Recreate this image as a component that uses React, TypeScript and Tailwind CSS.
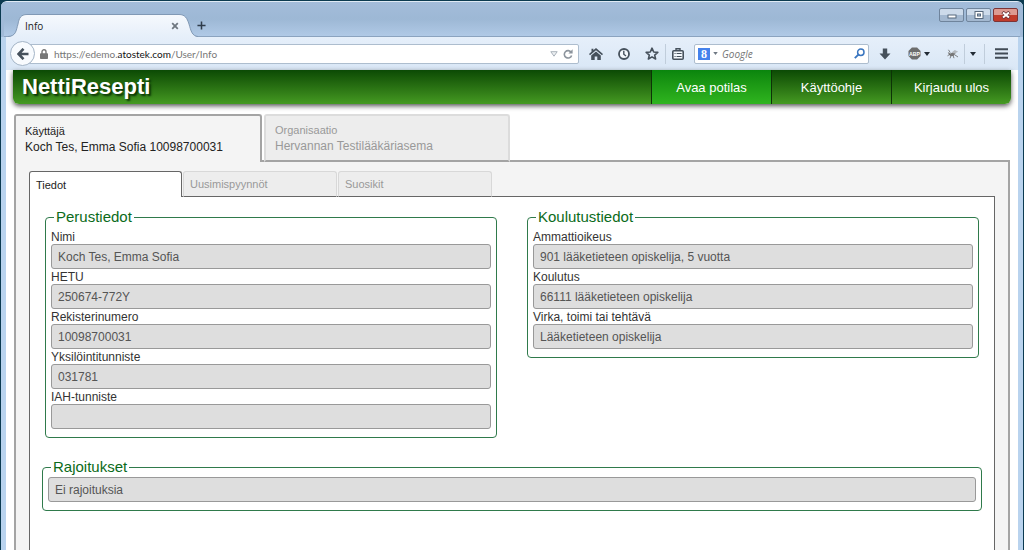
import { useState } from 'react';
import type { ReactNode } from 'react';

function BrowserTab() {
  return (
    <div className="relative -mb-px ml-1 flex h-[23px] w-[190px] items-center pr-[17px] pl-[17px]">
      <svg className="absolute inset-0 h-full w-full" viewBox="0 0 190 23" preserveAspectRatio="none" aria-hidden="true">
        <defs>
          <linearGradient id="tabFill" x1="0" y1="0" x2="0" y2="1">
            <stop offset="0" stopColor="#f6f9fd" />
            <stop offset="1" stopColor="#e6effa" />
          </linearGradient>
        </defs>
        <path d="M0 23 C8 22 8 17 10 10 C11 4 13 0.5 19 0.5 H171 C177 0.5 179 4 181 10 C183 17 184 22 190 23 Z" fill="url(#tabFill)" />
        <path d="M0 22.5 C8 22 8 17 10 10 C11 4 13 0.5 19 0.5 H171 C177 0.5 179 4 181 10 C183 17 184 22 190 22.5" fill="none" stroke="#8199b5" />
      </svg>
      <span className="relative flex-1 text-[10px] leading-4 text-[#222]">Info</span>
      <button aria-label="Sulje välilehti" className="relative flex size-3 items-center justify-center">
        <svg viewBox="0 0 8 8" className="size-2" aria-hidden="true">
          <path d="M1.2 1.2 L6.8 6.8 M6.8 1.2 L1.2 6.8" stroke="#6f7780" strokeWidth="1.8" />
        </svg>
      </button>
    </div>
  );
}

function TitleBar() {
  return (
    <div className="flex h-[35px] items-end justify-between rounded-t-[5px] border-b border-[#8ba3bf] bg-linear-to-b from-[#a3bcda] via-[#9db8d5] to-[#b0c9e6]">
      <div className="flex items-end">
        <BrowserTab />
        <button aria-label="Uusi välilehti" className="mb-[5px] -ml-[3px] flex size-3 items-center justify-center">
          <svg viewBox="0 0 10 10" className="size-[9px]" aria-hidden="true">
            <path d="M5 0.5 V9.5 M0.5 5 H9.5" stroke="#2f3c4b" strokeWidth="1.7" />
          </svg>
        </button>
      </div>
      <div className="flex gap-0.5 self-start pt-[6px] pr-0.5">
        <button aria-label="Pienennä" className="flex h-[14px] w-[25px] items-center justify-center rounded-[2px] border border-[#6f849c] bg-linear-to-b from-[#ccdaea] from-50% to-[#a3b8d0] to-50%">
          <svg viewBox="0 0 10 8" className="h-2 w-[10px]" aria-hidden="true">
            <rect x="1" y="4" width="8" height="3" fill="#fff" stroke="#56687d" />
          </svg>
        </button>
        <button aria-label="Suurenna" className="flex h-[14px] w-[25px] items-center justify-center rounded-[2px] border border-[#6f849c] bg-linear-to-b from-[#ccdaea] from-50% to-[#a3b8d0] to-50%">
          <svg viewBox="0 0 10 8" className="h-2 w-[10px]" aria-hidden="true">
            <rect x="1" y="0.5" width="8" height="7" fill="#fff" stroke="#56687d" />
            <rect x="3.5" y="3" width="3" height="2" fill="#a9bdd4" stroke="#56687d" />
          </svg>
        </button>
        <button aria-label="Sulje" className="flex h-[14px] w-[25px] items-center justify-center rounded-[2px] border border-[#7d3436] bg-linear-to-b from-[#dd9a91] from-50% to-[#c03b2b] to-50%">
          <svg viewBox="0 0 10 8" className="h-2 w-[10px]" aria-hidden="true">
            <path d="M1.5 1 L8.5 7 M8.5 1 L1.5 7" stroke="#6b3334" strokeWidth="3.4" />
            <path d="M2 1.4 L8 6.6 M8 1.4 L2 6.6" stroke="#fff" strokeWidth="2" />
          </svg>
        </button>
      </div>
    </div>
  );
}

function ToolButton({ label, className, children }: { label: string; className: string; children: ReactNode }) {
  return (
    <button aria-label={label} className={`flex h-5 shrink-0 items-center justify-center ${className}`}>
      {children}
    </button>
  );
}

function Caret() {
  return (
    <svg viewBox="0 0 6 4" className="h-1 w-1.5" aria-hidden="true">
      <path d="M0 0 H6 L3 4 Z" fill="#222b35" />
    </svg>
  );
}

function Toolbar() {
  return (
    <div className="flex h-[33px] items-center bg-linear-to-b from-[#e6effa] to-[#d9e7f6] px-1">
      <button aria-label="Takaisin" className="z-10 flex size-[25px] shrink-0 items-center justify-center rounded-full border border-[#a3b4c6] bg-[#f8fbfe]">
        <svg viewBox="0 0 12 12" className="size-3" aria-hidden="true">
          <path d="M6.5 0.8 L1.5 6 L6.5 11.2 M2 6 H11.5" fill="none" stroke="#46515c" strokeWidth="2.6" />
        </svg>
      </button>
      <div className="-ml-3 flex h-5 flex-1 items-center rounded-[2px] border border-[#adbdce] bg-white pr-[5px] pl-4">
        <svg viewBox="0 0 8 10" className="h-[10px] w-2 shrink-0" aria-hidden="true">
          <path d="M2 5 V2.8 A2 2 0 0 1 6 2.8 V5" fill="none" stroke="#777" strokeWidth="1.4" />
          <rect y="4.2" width="8" height="5.8" rx="0.8" fill="#777" />
        </svg>
        <p className="ml-[6px] flex-1 font-[Lato,'Open_Sans',sans-serif] text-[10px] leading-4 text-[#777]">
          https://edemo.<span className="text-[#111]">atostek.com</span>/User/Info
        </p>
        <svg viewBox="0 0 8 6" className="h-1.5 w-2" aria-hidden="true">
          <path d="M0.8 0.7 H7.2 L4 5.2 Z" fill="#eceff2" stroke="#aab2bb" />
        </svg>
        <button aria-label="Päivitä" className="ml-[5px]">
          <svg viewBox="0 0 10 10" className="size-[10px]" aria-hidden="true">
            <path d="M8.2 3.4 A3.7 3.7 0 1 0 8.6 6.4" fill="none" stroke="#8c949d" strokeWidth="1.6" />
            <path d="M9.6 0.3 V4.5 H5.4 Z" fill="#8c949d" />
          </svg>
        </button>
      </div>
      <ToolButton label="Koti" className="ml-[3px] w-7">
        <svg viewBox="0 0 14 12" className="h-3 w-[14px]" aria-hidden="true">
          <path d="M7 0 L14 6 L13 7.2 L7 2.2 L1 7.2 L0 6 L2.5 3.8 V0.8 H4.4 V2.2 Z" fill="#46515c" />
          <path d="M7 3.4 L11.8 7.4 V12 H8.3 V8.4 H5.7 V12 H2.2 V7.4 Z" fill="#46515c" />
        </svg>
      </ToolButton>
      <ToolButton label="Historia" className="w-7">
        <svg viewBox="0 0 12 12" className="size-3" aria-hidden="true">
          <circle cx="6" cy="6" r="5" fill="#f4f8fc" stroke="#46515c" strokeWidth="1.8" />
          <path d="M5.8 2.8 V6.2 L8 8" fill="none" stroke="#46515c" strokeWidth="1.4" />
        </svg>
      </ToolButton>
      <ToolButton label="Lisää kirjanmerkki" className="w-7 border-r border-[#c0cddb]">
        <svg viewBox="0 0 14 13" className="h-[13px] w-[14px]" aria-hidden="true">
          <path d="M7 1.2 L8.7 5 L12.8 5.4 L9.7 8.1 L10.6 12 L7 9.9 L3.4 12 L4.3 8.1 L1.2 5.4 L5.3 5 Z" fill="none" stroke="#46515c" strokeWidth="1.6" strokeLinejoin="round" />
        </svg>
      </ToolButton>
      <ToolButton label="Kirjanmerkit" className="w-[23px]">
        <svg viewBox="0 0 12 12" className="size-3" aria-hidden="true">
          <rect x="0.8" y="2.8" width="10.4" height="8.4" rx="1" fill="#f4f8fc" stroke="#46515c" strokeWidth="1.6" />
          <path d="M4 2.5 V0.7 H8 V2.5" fill="none" stroke="#46515c" strokeWidth="1.4" />
          <path d="M2.5 5.5 H3.6 M4.6 5.5 H9.6 M2.5 8.5 H3.6 M4.6 8.5 H9.6" stroke="#46515c" />
        </svg>
      </ToolButton>
      <div className="ml-[5px] flex h-5 w-[175px] shrink-0 items-center rounded-[2px] border border-[#adbdce] bg-white px-[3px]">
        <span className="flex size-3 shrink-0 items-center justify-center bg-[#4582ec] font-['Liberation_Serif',serif] text-[12px] leading-3 font-bold text-white">
          8
        </span>
        <svg viewBox="0 0 6 4" className="ml-[3px] h-[3px] w-[5px] shrink-0" aria-hidden="true">
          <path d="M0 0 H6 L3 4 Z" fill="#6f7883" />
        </svg>
        <input
          type="text"
          aria-label="Google-haku"
          placeholder="Google"
          className="ml-1 w-full min-w-0 bg-transparent text-[10px] leading-4 text-[#333] italic outline-none placeholder:text-[#757575]"
        />
        <svg viewBox="0 0 11 11" className="size-[11px] shrink-0" aria-hidden="true">
          <circle cx="6.8" cy="4.2" r="3.2" fill="none" stroke="#3a76c0" strokeWidth="1.5" />
          <path d="M4.4 6.6 L0.8 10.2" stroke="#3a76c0" strokeWidth="1.9" />
        </svg>
      </div>
      <ToolButton label="Lataukset" className="ml-0.5 w-7">
        <svg viewBox="0 0 12 12" className="size-3" aria-hidden="true">
          <path d="M3.8 0.5 H8.2 V5.5 H11.5 L6 11.5 L0.5 5.5 H3.8 Z" fill="#46515c" />
        </svg>
      </ToolButton>
      <ToolButton label="Adblock Plus" className="ml-[9px] gap-[3px]">
        <svg viewBox="0 0 14 14" className="size-[13px]" aria-hidden="true">
          <path d="M4.2 0.5 H9.8 L13.5 4.2 V9.8 L9.8 13.5 H4.2 L0.5 9.8 V4.2 Z" fill="#6d6d6d" />
          <text x="7" y="9.3" textAnchor="middle" fontSize="5.6" fontWeight="bold" fontFamily="Liberation Sans, sans-serif" fill="#fff">ABP</text>
        </svg>
        <Caret />
      </ToolButton>
      <ToolButton label="Firebug" className="ml-[13px] w-[22px] border-r border-[#c0cddb] pr-0.5">
        <svg viewBox="0 0 12 10" className="h-[10px] w-3" aria-hidden="true">
          <path d="M0.8 3 L3.4 4.4 L5.6 3.6 L8.6 4.2 L7 6.8 L3.6 7.2 L1.8 5.6 Z" fill="#777" />
          <path d="M4.5 3.5 L7.8 1 L11.2 2.8 L7.5 4.6 Z" fill="#b4b9bf" />
          <path d="M0.5 6.8 L2.8 5.4 M3 9.4 L4 6.8 M7 9.2 L6 6.4 M8 6 L11 8 M1.5 0.8 L3.2 3.6" stroke="#666" strokeWidth="0.8" />
        </svg>
      </ToolButton>
      <ToolButton label="Firebug-valikko" className="w-5 border-r border-[#c0cddb] pr-1">
        <Caret />
      </ToolButton>
      <ToolButton label="Valikko" className="mr-[6px] ml-[9px] w-[14px]">
        <svg viewBox="0 0 13 11" className="h-[11px] w-[13px]" aria-hidden="true">
          <path d="M0 1.2 H13 M0 5.5 H13 M0 9.8 H13" stroke="#414b56" strokeWidth="2" />
        </svg>
      </ToolButton>
    </div>
  );
}

function SiteHeader() {
  return (
    <header className="flex h-[34px] items-stretch justify-between overflow-hidden rounded-b-[6px] bg-linear-to-b from-[#0b4a05] to-[#459a22] text-white">
      <h1 className="pl-[9px] text-[22px] leading-[34px] font-bold text-shadow-[2px_2px_2px_#0a3306]">NettiResepti</h1>
      <nav className="flex text-center text-[13px] leading-[35px]">
        <a href="#avaa" className="w-[120px] border-l border-[#0d3307] bg-linear-to-b from-[#0a850d] to-[#2fb51f]">Avaa potilas</a>
        <a href="#ohje" className="w-[120px] border-l border-[#0d3307]">Käyttöohje</a>
        <a href="#ulos" className="w-[120px] border-l border-[#0d3307]">Kirjaudu ulos</a>
      </nav>
    </header>
  );
}

interface FieldData {
  id: string;
  label: string;
  value: string;
}

const basics: FieldData[] = [
  { id: 'nimi', label: 'Nimi', value: 'Koch Tes, Emma Sofia' },
  { id: 'hetu', label: 'HETU', value: '250674-772Y' },
  { id: 'rekisterinumero', label: 'Rekisterinumero', value: '10098700031' },
  { id: 'yksilointi', label: 'Yksilöintitunniste', value: '031781' },
  { id: 'iah', label: 'IAH-tunniste', value: '' },
];

const education: FieldData[] = [
  { id: 'ammattioikeus', label: 'Ammattioikeus', value: '901 lääketieteen opiskelija, 5 vuotta' },
  { id: 'koulutus', label: 'Koulutus', value: '66111 lääketieteen opiskelija' },
  { id: 'virka', label: 'Virka, toimi tai tehtävä', value: 'Lääketieteen opiskelija' },
];

const inputClass =
  'block h-[25px] w-full rounded-[3px] border border-[#999] bg-[#dedede] px-[6px] text-[12px] leading-4 text-[#555] outline-none';

function Group({ title, children }: { title: string; children: ReactNode }) {
  return (
    <fieldset className="min-w-0 rounded-[4px] border border-[#2f7a4b] px-[5px] pb-2">
      <legend className="ml-[3px] px-0.5 text-[15px] leading-5 text-[#0b6b1a]">{title}</legend>
      {children}
    </fieldset>
  );
}

function Fields({ items }: { items: FieldData[] }) {
  return (
    <div className="pt-0.5">
      {items.map((f) => (
        <div key={f.id}>
          <label htmlFor={f.id} className="block pt-px text-[12px] leading-[14px] text-[#333]">{f.label}</label>
          <input id={f.id} type="text" readOnly defaultValue={f.value} className={inputClass} />
        </div>
      ))}
    </div>
  );
}

const sections = ['Tiedot', 'Uusimispyynnöt', 'Suosikit'];

export default function App() {
  const [owner, setOwner] = useState(0);
  const [section, setSection] = useState(0);
  const owners = [
    { role: 'Käyttäjä', name: 'Koch Tes, Emma Sofia 10098700031' },
    { role: 'Organisaatio', name: 'Hervannan Testilääkäriasema' },
  ];
  return (
    <div className="flex min-h-screen flex-col bg-[#0b3a50] px-px pt-px font-['Liberation_Sans',Arial,sans-serif]">
      <div className="flex flex-1 flex-col rounded-t-[6px] border-t border-[#dfeaf5] bg-[#b9d3ee] px-[5px]">
        <div className="-mx-[5px] rounded-t-[5px] bg-[#a0bad8] px-[3px] font-['Open_Sans','Noto_Sans',sans-serif]">
          <TitleBar />
        </div>
        <div className="font-['Open_Sans','Noto_Sans',sans-serif]">
          <Toolbar />
        </div>
        <div className="flex flex-1 flex-col bg-white px-[7px]">
          <div className="rounded-b-[6px] shadow-[0_2px_5px_#555]">
            <SiteHeader />
          </div>
          <main className="mr-px ml-px flex flex-1 flex-col pt-[10px]">
            <div role="tablist" aria-label="Rooli" className="relative z-10 -mb-px flex gap-0.5">
              {owners.map((o, i) => (
                <button
                  key={o.role}
                  role="tab"
                  aria-selected={owner === i}
                  onClick={() => setOwner(i)}
                  className={
                    owner === i
                      ? 'h-12 w-[248px] rounded-t-[3px] border-2 border-b-0 border-[#a4a4a4] bg-[#f4f4f4] pl-[9px] text-left text-[#222]'
                      : 'h-12 w-[246px] rounded-t-[3px] border-2 border-b-[#a4a4a4] border-[#dcdcdc] bg-[#ededed] pl-[9px] text-left text-[#999]'
                  }
                >
                  <span className="block text-[11px] leading-4">{o.role}</span>
                  <span className="block text-[12px] leading-4">{o.name}</span>
                </button>
              ))}
            </div>
            <div className="-mt-px flex flex-1 flex-col border-2 border-b-0 border-[#a4a4a4] bg-[#f4f4f4] px-[13px] pt-[9px]">
              <div role="tablist" aria-label="Osio" className="relative z-10 -mb-px flex gap-px">
                {sections.map((s, i) => (
                  <button
                    key={s}
                    role="tab"
                    aria-selected={section === i}
                    onClick={() => setSection(i)}
                    className={
                      section === i
                        ? 'h-[26px] w-[153px] rounded-t-[3px] border border-b-0 border-[#666] bg-white pl-[6px] text-left text-[11px] leading-4 text-[#222]'
                        : 'h-[26px] w-[154px] rounded-t-[3px] border border-b-[#666] border-[#d8d8d8] bg-[#ededed] pl-[6px] text-left text-[11px] leading-4 text-[#999]'
                    }
                  >
                    {s}
                  </button>
                ))}
              </div>
              <div className="flex-1 border border-b-0 border-[#666] bg-white px-3 pt-[10px]">
                <div className="grid grid-cols-2 items-start gap-[30px] px-[3px]">
                  <Group title="Perustiedot">
                    <Fields items={basics} />
                  </Group>
                  <Group title="Koulutustiedot">
                    <Fields items={education} />
                  </Group>
                </div>
                <div className="pt-[19px]">
                  <Group title="Rajoitukset">
                    <input type="text" readOnly aria-label="Rajoitukset" defaultValue="Ei rajoituksia" className={inputClass} />
                  </Group>
                </div>
              </div>
            </div>
          </main>
        </div>
      </div>
    </div>
  );
}
